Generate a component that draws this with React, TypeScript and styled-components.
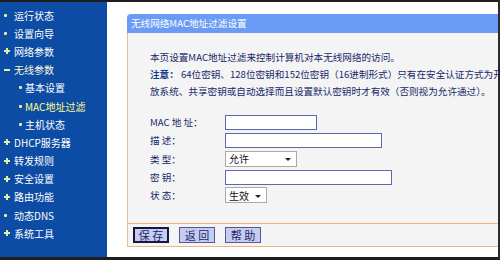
import styled, { createGlobalStyle } from 'styled-components'

type MenuItem = {
  label: string
  marker: 'dot' | 'plus' | 'minus'
  sub?: boolean
  tone?: 'normal' | 'open' | 'active'
}

const menu: MenuItem[] = [
  { label: '运行状态', marker: 'dot' },
  { label: '设置向导', marker: 'dot' },
  { label: '网络参数', marker: 'plus' },
  { label: '无线参数', marker: 'minus', tone: 'open' },
  { label: '基本设置', marker: 'dot', sub: true },
  { label: 'MAC地址过滤', marker: 'dot', sub: true, tone: 'active' },
  { label: '主机状态', marker: 'dot', sub: true },
  { label: 'DHCP服务器', marker: 'plus' },
  { label: '转发规则', marker: 'plus' },
  { label: '安全设置', marker: 'plus' },
  { label: '路由功能', marker: 'plus' },
  { label: '动态DNS', marker: 'dot' },
  { label: '系统工具', marker: 'plus' },
]

const textColors = {
  normal: '#ffffff',
  open: '#fbf8d6',
  active: '#ffff8a',
}

export default function App() {
  return (
    <>
      <GlobalStyle />
      <Frame>
        <Sidebar>
          {menu.map((item) => (
            <NavItem key={item.label} $sub={item.sub} $tone={item.tone ?? 'normal'}>
              <MarkerSlot $sub={item.sub}>
                <Marker $kind={item.marker} />
              </MarkerSlot>
              {item.label}
            </NavItem>
          ))}
        </Sidebar>

        <Main>
          <PanelHeader>无线网络MAC地址过滤设置</PanelHeader>
          <PanelBody>
            <Intro>
              <Line>本页设置MAC地址过滤来控制计算机对本无线网络的访问。</Line>
              <Line>
                <Strong>注意：</Strong> 64位密钥、128位密钥和152位密钥（16进制形式）只有在安全认证方式为开
              </Line>
              <Line>放系统、共享密钥或自动选择而且设置默认密钥时才有效（否则视为允许通过）。</Line>
            </Intro>

            <Form>
              <Label>MAC 地 址：</Label>
              <TextBox $width={92} />
              <Label>描 述：</Label>
              <TextBox $width={157} />
              <Label>类 型：</Label>
              <SelectBox $width={72}>
                允许
                <Arrow />
              </SelectBox>
              <Label>密 钥：</Label>
              <TextBox $width={167} />
              <Label>状 态：</Label>
              <SelectBox $width={42}>
                生效
                <Arrow />
              </SelectBox>
            </Form>
          </PanelBody>
          <ButtonRow>
            <Button type="button" $primary>保 存</Button>
            <Button type="button">返 回</Button>
            <Button type="button">帮 助</Button>
          </ButtonRow>
        </Main>
      </Frame>
    </>
  )
}

const GlobalStyle = createGlobalStyle`
  body {
    margin: 0;
    background: #ffffff;
    font-family: "Noto Sans CJK SC", "DejaVu Sans", sans-serif;
    font-size: 10px;
  }
`

const Frame = styled.div`
  display: flex;
  width: 500px;
  height: 260px;
  box-sizing: border-box;
  border-top: 2px solid #1e1e1e;
  border-right: 2px solid #2a2a2a;
  border-bottom: 3px solid #1e1e1e;
  overflow: hidden;
  background: #ffffff;
`

const Sidebar = styled.nav`
  width: 107px;
  flex-shrink: 0;
  padding-top: 4px;
  background: #0c4ca4;
`

const NavItem = styled.div<{ $sub?: boolean; $tone: 'normal' | 'open' | 'active' }>`
  display: flex;
  align-items: center;
  height: 18.2px;
  padding-left: ${(p) => (p.$sub ? '18px' : '3px')};
  color: ${(p) => textColors[p.$tone]};
  font-size: 10px;
  white-space: nowrap;
`

const MarkerSlot = styled.span<{ $sub?: boolean }>`
  display: inline-flex;
  align-items: center;
  width: ${(p) => (p.$sub ? '7px' : '11px')};
  height: 10px;
`

const Marker = styled.span<{ $kind: 'dot' | 'plus' | 'minus' }>`
  position: relative;
  display: block;
  width: ${(p) => (p.$kind === 'dot' ? '3px' : '6px')};
  height: ${(p) => (p.$kind === 'dot' ? '3px' : '6px')};
  margin-left: 1px;

  &::before,
  &::after {
    content: '';
    position: absolute;
    background: #e4efa8;
  }

  &::before {
    left: 0;
    right: 0;
    top: ${(p) => (p.$kind === 'dot' ? '0' : '2px')};
    height: ${(p) => (p.$kind === 'dot' ? '3px' : '2px')};
    border-radius: ${(p) => (p.$kind === 'dot' ? '1px' : '0')};
  }

  &::after {
    display: ${(p) => (p.$kind === 'plus' ? 'block' : 'none')};
    top: 0;
    bottom: 0;
    left: 2px;
    width: 2px;
  }
`

const Main = styled.main`
  flex: 1;
  min-width: 0;
  padding: 12px 0 0 20px;
  overflow: hidden;
  font-size: 9.6px;
`

const PanelHeader = styled.div`
  height: 19px;
  padding-left: 4px;
  border-radius: 4px 0 0 0;
  background: #6a9cf6;
  color: #ffffff;
  line-height: 19px;
  white-space: nowrap;
`

const PanelBody = styled.section`
  height: 191px;
  box-sizing: border-box;
  padding: 16px 0 0 22px;
  border-left: 1px solid #f2bd88;
  border-bottom: 1px solid #f2b47a;
  background: #f4f4f4;
  color: #17276a;
`

const Intro = styled.div`
  display: flex;
  flex-direction: column;
`

const Line = styled.div`
  height: 17px;
  line-height: 17px;
  white-space: nowrap;
`

const Strong = styled.b`
  color: #173a8c;
  font-weight: 700;
`

const Form = styled.div`
  display: grid;
  grid-template-columns: 75px auto;
  grid-auto-rows: 18.3px;
  align-items: center;
  justify-items: start;
  margin-top: 13px;
`

const Label = styled.span`
  color: #17276a;
  white-space: nowrap;
`

const TextBox = styled.input<{ $width: number }>`
  width: ${(p) => p.$width}px;
  height: 15px;
  box-sizing: border-box;
  margin: 0;
  padding: 0 2px;
  border: 1px solid #5d67ad;
  background: #ffffff;
  font: inherit;
  outline: none;
`

const SelectBox = styled.div<{ $width: number }>`
  display: flex;
  align-items: center;
  justify-content: space-between;
  width: ${(p) => p.$width}px;
  height: 16px;
  box-sizing: border-box;
  padding: 0 5px 0 3px;
  border: 1px solid #a9a9a9;
  background: #ffffff;
  color: #111111;
  font-size: 10px;
`

const Arrow = styled.span`
  width: 0;
  height: 0;
  border-left: 3px solid transparent;
  border-right: 3px solid transparent;
  border-top: 3px solid #222222;
  margin-top: 2px;
`

const ButtonRow = styled.div`
  display: flex;
  align-items: center;
  gap: 10px;
  height: 23px;
  box-sizing: border-box;
  padding-left: 5px;
  border-left: 1px solid #f2bd88;
  border-bottom: 1px solid #f2b47a;
  background: #f4f4f4;
`

const Button = styled.button<{ $primary?: boolean }>`
  width: 36px;
  height: 16px;
  box-sizing: border-box;
  margin: 0;
  padding: 0;
  border: ${(p) => (p.$primary ? '2px solid #15163a' : '1px solid #55588a')};
  background: #c6ccef;
  color: #17276a;
  font-family: inherit;
  font-size: 11px;
  line-height: 12px;
  cursor: pointer;
`
